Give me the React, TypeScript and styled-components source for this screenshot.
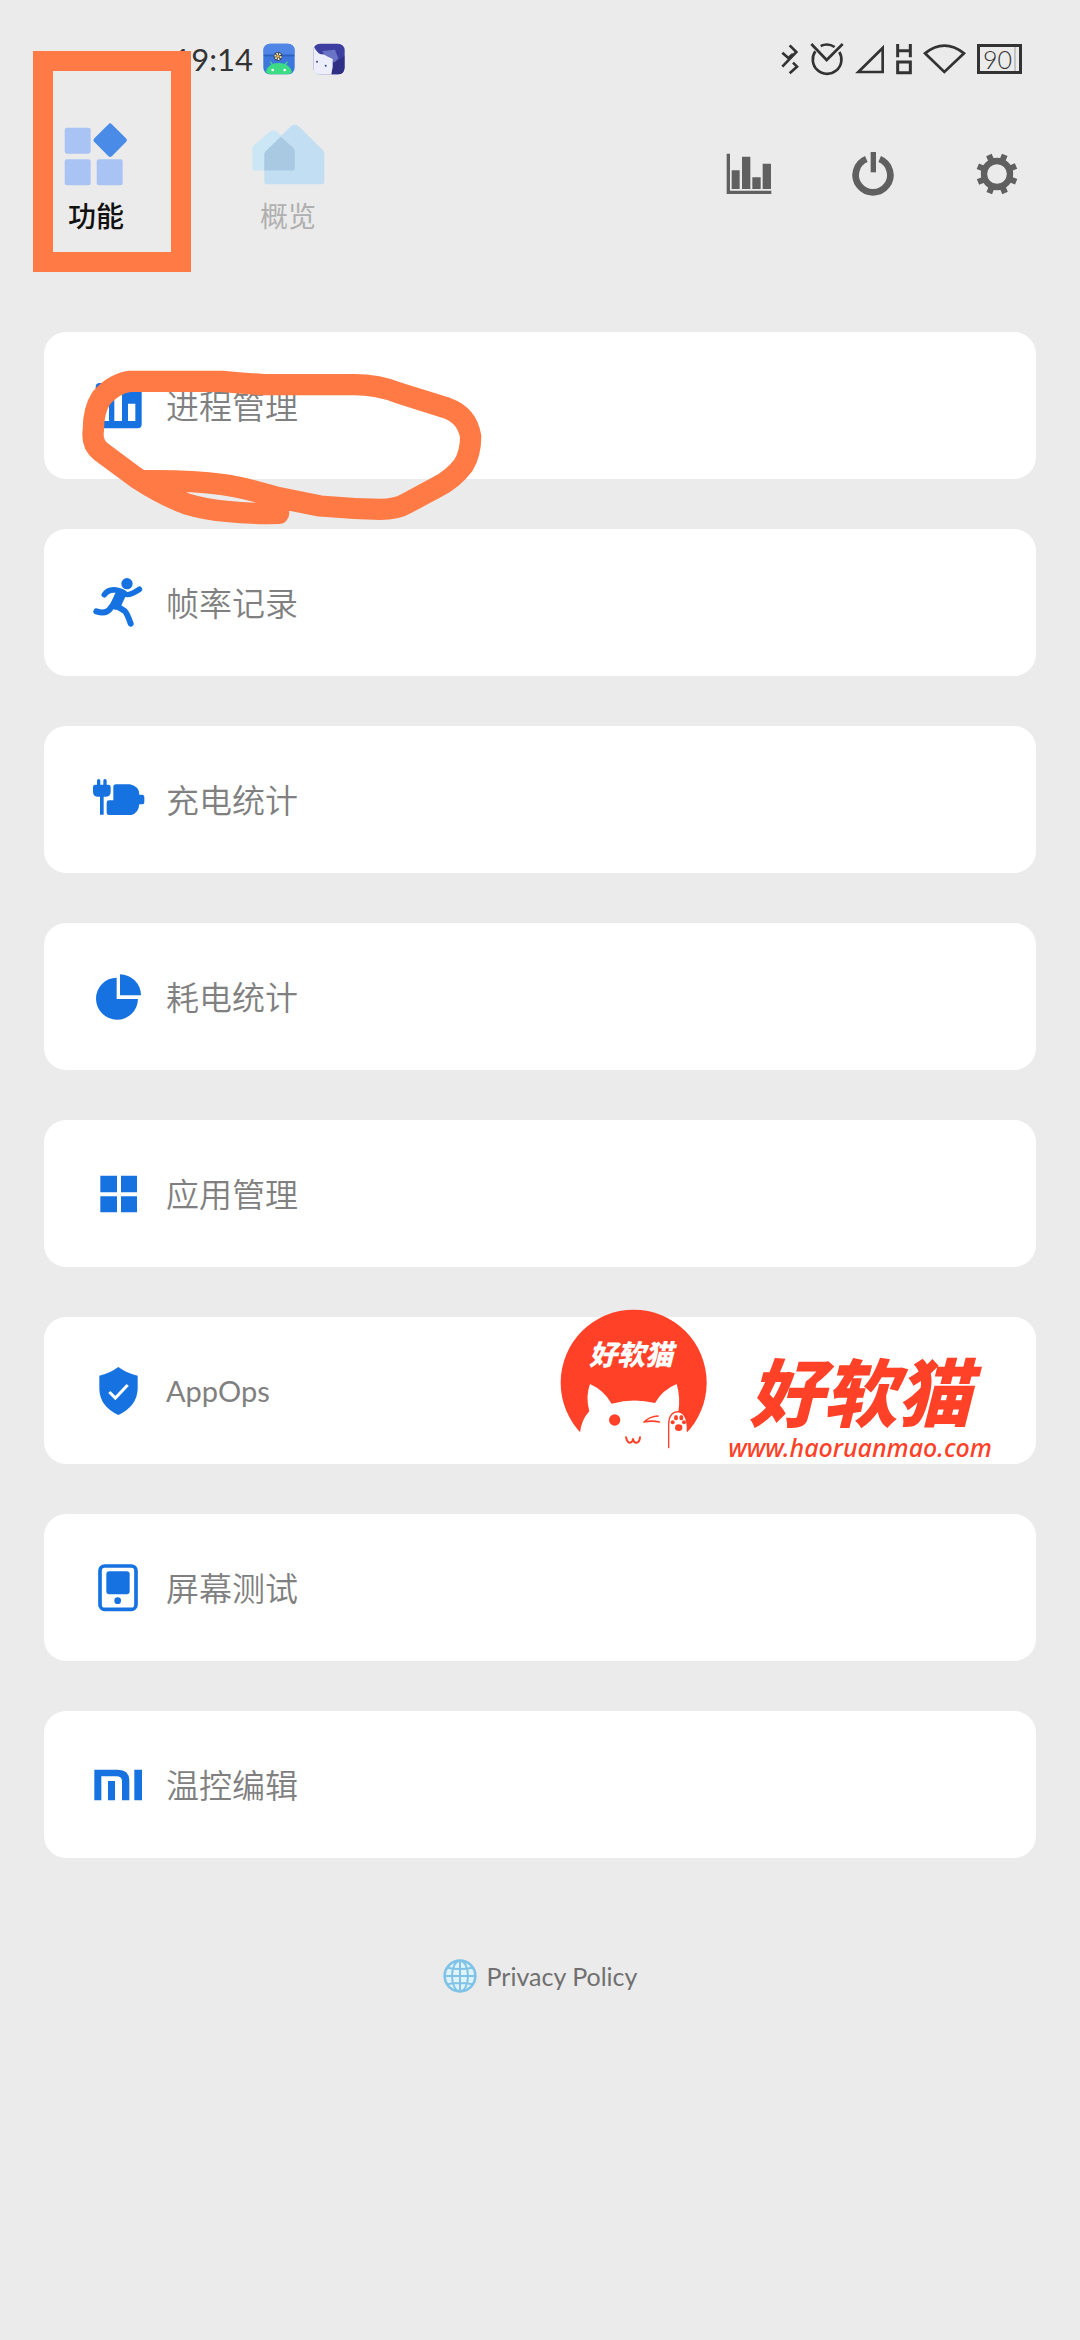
import React from "react";
import styled, { createGlobalStyle } from "styled-components";

const ORANGE = "#ff7a45";
const BLUE = "#1672e0";
const RED = "#ff4128";
const INK = "#333333";

const GlobalStyle = createGlobalStyle`
  *, *::before, *::after { box-sizing: border-box; }
  body {
    margin: 0;
    background: #ebebeb;
    font-family: Lato, "Noto Sans CJK SC", sans-serif;
  }
  svg { display: block; flex: none; overflow: visible; }
`;

const Page = styled.div`
  min-height: 100vh;
  background: #ebebeb;
  overflow-x: hidden;
`;

const StatusBar = styled.header`
  display: flex;
  align-items: center;
  justify-content: space-between;
  height: 116px;
  padding: 2px 58px 0 177px;
`;

const StatusGroup = styled.div<{ $gap: number }>`
  display: flex;
  align-items: center;
  gap: ${(p) => p.$gap}px;
`;

const Clock = styled.time`
  color: ${INK};
  font-size: 31px;
  line-height: 40px;
  width: 76px;
  display: flex;
  justify-content: flex-end;
  margin-right: -8px;
`;

const Battery = styled.span`
  width: 45px;
  height: 30px;
  padding-right: 4px;
  border: 3px solid ${INK};
  background: linear-gradient(#c4c4c4, #c4c4c4) 34px 0 / 2px 100% no-repeat;
  color: ${INK};
  font-size: 25px;
  font-weight: 300;
  line-height: 24px;
  text-align: center;
`;

const TopBar = styled.div`
  display: flex;
  justify-content: space-between;
  align-items: center;
`;

const Tabs = styled.nav`
  display: flex;
`;

const Tab = styled.button<{ $active?: boolean }>`
  position: relative;
  display: flex;
  flex-direction: column;
  align-items: center;
  gap: 10px;
  width: 192px;
  padding: 6px 0 0;
  border: 0;
  background: none;
  color: ${(p) => (p.$active ? "#111111" : "#b0b0b0")};
  font-family: inherit;
  font-size: 28px;
  font-weight: ${(p) => (p.$active ? 500 : 400)};
  line-height: 40px;
`;

const TabMarker = styled.span`
  position: absolute;
  left: 33px;
  top: -65px;
  width: 158px;
  height: 221px;
  border: 20px solid ${ORANGE};
  pointer-events: none;
`;

const Actions = styled.div`
  display: flex;
  gap: 76px;
  padding: 0 59px 4px 0;
`;

const IconButton = styled.button`
  display: grid;
  place-items: center;
  width: 48px;
  height: 48px;
  padding: 0;
  border: 0;
  background: none;
  color: #606060;
`;

const List = styled.main`
  display: flex;
  flex-direction: column;
  gap: 50px;
  padding: 96px 44px 0;
`;

const Card = styled.div`
  position: relative;
  border-radius: 22px;
  background: #ffffff;
`;

const CardButton = styled.button`
  display: flex;
  align-items: center;
  gap: 24px;
  width: 100%;
  height: 147px;
  padding: 0 50px;
  border: 0;
  border-radius: 22px;
  background: none;
  color: #808080;
  text-align: left;
`;

const CardLabel = styled.span<{ $latin?: boolean }>`
  font-family: Lato, "Noto Sans CJK SC", sans-serif;
  font-size: ${(p) => (p.$latin ? 29 : 33)}px;
  font-weight: ${(p) => (p.$latin ? 400 : 350)};
  line-height: 48px;
`;

const ScribbleArt = styled.svg`
  position: absolute;
  left: -14px;
  top: -12px;
  z-index: 1;
  pointer-events: none;
`;

const Brand = styled.div`
  position: absolute;
  right: 44px;
  top: -8px;
  display: flex;
  gap: 20px;
  pointer-events: none;
`;

const Badge = styled.div`
  position: relative;
`;

const BadgeText = styled.span`
  position: absolute;
  left: 0;
  right: 6px;
  top: 28px;
  color: #ffffff;
  font-family: "Noto Sans CJK SC", sans-serif;
  font-size: 28px;
  font-weight: 900;
  font-style: italic;
  line-height: 32px;
  text-align: center;
`;

const Wordmark = styled.div`
  display: flex;
  flex-direction: column;
  align-items: center;
  gap: 8px;
  width: 264px;
  padding-top: 44px;
  color: ${RED};
  white-space: nowrap;
`;

const BrandName = styled.strong`
  font-family: "Noto Sans CJK SC", sans-serif;
  font-size: 74px;
  font-weight: 900;
  font-style: italic;
  line-height: 72px;
`;

const BrandUrl = styled.span`
  font-family: "Noto Sans", sans-serif;
  font-size: 25px;
  font-weight: 500;
  font-style: italic;
  line-height: 28px;
`;

const Footer = styled.footer`
  display: flex;
  justify-content: center;
  padding: 98px 0 60px;
`;

const PolicyLink = styled.a`
  display: flex;
  align-items: center;
  gap: 10px;
  color: #707070;
  font-size: 25px;
  line-height: 40px;
  text-decoration: none;
`;

const MapsAppIcon = () => (
  <svg width="32" height="32" viewBox="0 0 96 96" aria-hidden="true">
    <rect x="1" y="2" width="94" height="92" rx="20" fill="#3d76dc" />
    <path d="M2 22a20 20 0 0 1 20-20h52a20 20 0 0 1 20 20v10H2z" fill="#4f86e6" />
    <path d="M2 38h92" stroke="#2b5fb8" strokeWidth="4" />
    <path d="M8 88C12 70 26 60 47 60s36 10 40 28q-6 6-15 6H22q-8 0-14-6z" fill="#3ddb84" />
    <path d="M22 56l8 12M73 56l-8 12" stroke="#3ddb84" strokeWidth="4" />
    <circle cx="29" cy="81" r="4" fill="#fff" />
    <circle cx="65" cy="81" r="4" fill="#fff" />
    <circle cx="45" cy="40" r="13" fill="#33415c" />
    <circle cx="45" cy="40" r="8" fill="none" stroke="#f3e3b0" strokeWidth="6" strokeDasharray="5 3" />
    <circle cx="45" cy="40" r="4" fill="#e9b93c" />
  </svg>
);

const AvatarAppIcon = () => (
  <svg width="32" height="32" viewBox="0 0 96 96" aria-hidden="true">
    <rect x="1" y="2" width="94" height="92" rx="20" fill="#3c3fa0" />
    <path d="M28 24l38-4 10 26-12 14-28-22z" fill="#6a74c4" />
    <path d="M60 60l34-20v34q0 20-20 20H56z" fill="#2f2f86" />
    <path d="M1 8q10 20 22 26 12-2 16 4l20 10 0 24-4 22H22Q1 94 1 74z" fill="#eceffb" />
    <circle cx="12" cy="56" r="3" fill="#39408f" />
    <circle cx="38" cy="68" r="3" fill="#39408f" />
  </svg>
);

const BluetoothIcon = () => (
  <svg width="18" height="30" viewBox="0 0 54 90" fill="none" stroke={INK} strokeWidth="8" role="img" aria-label="蓝牙">
    <path d="M26 4l20 20L4 68M4 26l18 16 14-12M26 88l22-20-12-12" />
  </svg>
);

const AlarmIcon = () => (
  <svg width="34" height="34" viewBox="0 0 102 102" fill="none" stroke={INK} strokeWidth="8" role="img" aria-label="闹钟">
    <path d="M16 28a43 43 0 1 0 72 2" />
    <path d="M32 12a43 43 0 0 1 42 3" />
    <path d="M4 6l46 48L98 6" />
  </svg>
);

const SignalIcon = () => (
  <svg width="30" height="30" viewBox="0 0 90 90" fill="none" stroke={INK} strokeWidth="8" role="img" aria-label="信号">
    <path d="M10 84L83 12v72z" />
  </svg>
);

const HdIcon = () => (
  <svg width="16" height="30" viewBox="0 0 48 90" fill="none" stroke={INK} strokeWidth="9" role="img" aria-label="HD">
    <path d="M5 0v40M43 0v40M5 20h38M5 54h38v32H5z" />
  </svg>
);

const WifiIcon = () => (
  <svg width="43" height="30" viewBox="0 0 129 90" fill="none" stroke={INK} strokeWidth="8" role="img" aria-label="无线网络">
    <path d="M6 28Q64-18 123 28L64 84z" />
  </svg>
);

const FeaturesIcon = () => (
  <svg width="64" height="64" viewBox="130 304 192 192" aria-hidden="true">
    <g fill="#a9c4f4">
      <rect x="132" y="321" width="78" height="78" rx="7" />
      <rect x="132" y="416" width="78" height="78" rx="7" />
      <rect x="228" y="416" width="78" height="78" rx="7" />
    </g>
    <rect x="231" y="321" width="75" height="75" rx="7" fill="#4a8be8" transform="rotate(45 268.5 358.5)" />
  </svg>
);

const OverviewIcon = () => (
  <svg width="75" height="64" viewBox="688 304 226 192" aria-hidden="true">
    <path d="M692 384q0-6 5-11l48-41q10-7 20 0l50 43q5 5 5 11v56q0 8-8 8H700q-8 0-8-8z" fill="#cbe6f5" />
    <path d="M728 402q0-6 5-11l76-75q11-9 22 0l73 72q5 5 5 11v84q0 8-8 8H736q-8 0-8-8z" fill="#c1def3" />
    <path d="M728 402q0-6 5-11l45-43 37 33q5 5 5 11v50q0 8-8 8H728z" fill="#a9c9e3" />
  </svg>
);

const ChartIcon = () => (
  <svg width="46" height="42" viewBox="0 0 138 126" fill="currentColor" aria-hidden="true">
    <path d="M2 2h10v111h124v10H2z" />
    <path d="M17 52h24v56H17zM48 11h25v97H48zM79 73h25v35H79zM110 32h25v76h-25z" />
  </svg>
);

const PowerIcon = () => (
  <svg width="44" height="46" viewBox="0 0 132 138" fill="none" stroke="currentColor" aria-hidden="true">
    <path d="M46 24a52 52 0 1 0 40 0" strokeWidth="20" />
    <path d="M67 3v61" strokeWidth="16" />
  </svg>
);

const GearIcon = () => (
  <svg width="42" height="42" viewBox="-63 -63 126 126" aria-hidden="true">
    <circle r="39" fill="none" stroke="currentColor" strokeWidth="19" />
    {[0, 1, 2, 3, 4, 5, 6, 7].map((i) => (
      <path key={i} d="M-9-44V-62H9V-44z" fill="currentColor" transform={`rotate(${i * 45 + 22})`} />
    ))}
  </svg>
);

const Glyph = ({ children }: { children: React.ReactNode }) => (
  <svg width="48" height="48" viewBox="0 0 144 144" fill={BLUE} aria-hidden="true">
    {children}
  </svg>
);

const ProcessGlyph = () => (
  <Glyph>
    <rect x="5" y="3" width="138" height="136" rx="12" />
    <path d="M22 65h23v52H22zM61 26h23v91H61zM102 65h22v52h-22z" fill="#fff" />
  </Glyph>
);

const RunnerGlyph = () => (
  <Glyph>
    <circle cx="99" cy="14" r="17" />
    <g fill="none" stroke={BLUE} strokeLinecap="round" strokeLinejoin="round">
      <path d="M31 47Q42 30 66 33Q84 36 94 45Q104 52 136 31" strokeWidth="17" />
      <path d="M80 46L66 76" strokeWidth="32" />
      <path d="M7 97Q34 106 46 92L60 74" strokeWidth="18" />
      <path d="M66 80L92 96Q100 104 110 134" strokeWidth="18" />
    </g>
  </Glyph>
);

const ChargeGlyph = () => (
  <Glyph>
    <path d="M9 26V14q0-5 5-5t5 5v12h9V14q0-5 5-5t5 5v12h5q7 0 7 7v14q0 15-15 15h-6v54H18V62h-6Q-3 62-3 47V33q0-7 7-7z" />
    <path d="M66 25h42q28 6 28 31h8q7 0 7 7v14q0 8-7 8h-8q-2 26-24 32H45q-7 0-7-7V80q0-7 7-7h13V33q0-8 8-8z" />
  </Glyph>
);

const PieGlyph = () => (
  <Glyph>
    <path d="M68 14A63 63 0 1 0 132 78H68z" />
    <path d="M78 4A63 63 0 0 1 141 67H78z" />
  </Glyph>
);

const AppsGlyph = () => (
  <Glyph>
    <path d="M19 17h50v50H19zM81 17h48v50H81zM19 79h50v48H19zM81 79h48v48H81z" />
  </Glyph>
);

const ShieldGlyph = () => (
  <Glyph>
    <path d="M73 0Q100 20 131 26V66Q129 118 73 144Q17 118 16 66V26Q46 20 73 0z" />
    <path d="M46 75l18 18 37-39" fill="none" stroke="#fff" strokeWidth="9" />
  </Glyph>
);

const ScreenGlyph = () => (
  <Glyph>
    <rect x="18" y="6" width="108" height="130" rx="14" fill="none" stroke={BLUE} strokeWidth="11" />
    <rect x="37" y="22" width="70" height="69" rx="9" />
    <circle cx="71" cy="110" r="10" />
  </Glyph>
);

const MiGlyph = () => (
  <Glyph>
    <path d="M1 118V26H72Q106 26 106 60V118H84V62Q84 46 68 46H22V118z" />
    <path d="M42 60h21v58H42zM121 26h23v92h-23z" />
  </Glyph>
);

const GlobeIcon = () => (
  <svg width="34" height="34" viewBox="0 0 102 102" fill="none" stroke="#80c3e6" strokeWidth="6" aria-hidden="true">
    <circle cx="51" cy="51" r="46" fill="#dff3fb" strokeWidth="8" />
    <ellipse cx="51" cy="51" rx="24" ry="46" />
    <path d="M51 4v94M4 51h94M13 26q38 8 76 0M13 76q38-8 76 0" />
  </svg>
);

const Scribble = () => (
  <ScribbleArt width="470" height="220" viewBox="0 0 1410 660" aria-hidden="true">
    <path
      d="M746 580Q660 582 590 574Q530 570 470 552Q400 526 320 474L212 394Q184 372 190 330Q190 270 214 234Q250 192 300 184H575Q640 190 700 194H960Q1040 192 1110 220L1250 264Q1312 286 1322 350Q1322 400 1300 436Q1270 476 1220 502L1130 550Q1100 568 1050 568Q960 566 870 558L740 532Q640 502 580 494Q480 480 345 482"
      fill="none"
      stroke={ORANGE}
      strokeWidth="64"
      strokeLinecap="round"
      strokeLinejoin="round"
    />
  </ScribbleArt>
);

const CatArt = () => (
  <svg width="148" height="148" viewBox="60 58 444 444" aria-hidden="true">
    <circle cx="281" cy="279" r="219" fill={RED} />
    <path
      d="M60 502V430H120Q124 390 148 365Q136 320 150 283Q192 302 215 342Q280 324 345 340Q368 300 410 283Q422 324 415 366Q446 372 442 430H504V502z"
      fill="#fff"
    />
    <g fill="none" stroke={RED} strokeLinecap="round">
      <path d="M386 474V402Q388 366 415 366Q444 372 442 424" strokeWidth="4" />
      <path d="M312 397Q330 380 354 379M312 397Q336 392 358 397" strokeWidth="5" />
      <path d="M258 443Q262 460 270 459Q279 458 279 446Q280 458 288 459Q298 460 300 443" strokeWidth="6" />
    </g>
    <g fill={RED}>
      <circle cx="224" cy="391" r="17" />
      <circle cx="398" cy="398" r="6" />
      <ellipse cx="408" cy="384" rx="6" ry="8" />
      <ellipse cx="424" cy="384" rx="6" ry="8" />
      <circle cx="432" cy="398" r="6" />
      <ellipse cx="416" cy="414" rx="11" ry="10" />
    </g>
  </svg>
);

const Watermark = () => (
  <Brand>
    <Badge>
      <CatArt />
      <BadgeText>好软猫</BadgeText>
    </Badge>
    <Wordmark>
      <BrandName>好软猫</BrandName>
      <BrandUrl>www.haoruanmao.com</BrandUrl>
    </Wordmark>
  </Brand>
);

type Feature = {
  label: string;
  icon: React.ComponentType;
  latin?: boolean;
  overlay?: React.ComponentType;
};

const features: Feature[] = [
  { label: "进程管理", icon: ProcessGlyph, overlay: Scribble },
  { label: "帧率记录", icon: RunnerGlyph },
  { label: "充电统计", icon: ChargeGlyph },
  { label: "耗电统计", icon: PieGlyph },
  { label: "应用管理", icon: AppsGlyph },
  { label: "AppOps", icon: ShieldGlyph, latin: true, overlay: Watermark },
  { label: "屏幕测试", icon: ScreenGlyph },
  { label: "温控编辑", icon: MiGlyph },
];

export default function App() {
  return (
    <Page>
      <GlobalStyle />
      <StatusBar>
        <StatusGroup $gap={18}>
          <Clock>19:14</Clock>
          <MapsAppIcon />
          <AvatarAppIcon />
        </StatusGroup>
        <StatusGroup $gap={11}>
          <BluetoothIcon />
          <AlarmIcon />
          <SignalIcon />
          <HdIcon />
          <WifiIcon />
          <Battery>90</Battery>
        </StatusGroup>
      </StatusBar>
      <TopBar>
        <Tabs>
          <Tab $active>
            <FeaturesIcon />
            功能
            <TabMarker />
          </Tab>
          <Tab>
            <OverviewIcon />
            概览
          </Tab>
        </Tabs>
        <Actions>
          <IconButton aria-label="统计">
            <ChartIcon />
          </IconButton>
          <IconButton aria-label="电源">
            <PowerIcon />
          </IconButton>
          <IconButton aria-label="设置">
            <GearIcon />
          </IconButton>
        </Actions>
      </TopBar>
      <List>
        {features.map(({ label, icon: Icon, latin, overlay: Overlay }) => (
          <Card key={label}>
            <CardButton>
              <Icon />
              <CardLabel $latin={latin}>{label}</CardLabel>
            </CardButton>
            {Overlay && <Overlay />}
          </Card>
        ))}
      </List>
      <Footer>
        <PolicyLink href="#privacy">
          <GlobeIcon />
          Privacy Policy
        </PolicyLink>
      </Footer>
    </Page>
  );
}
